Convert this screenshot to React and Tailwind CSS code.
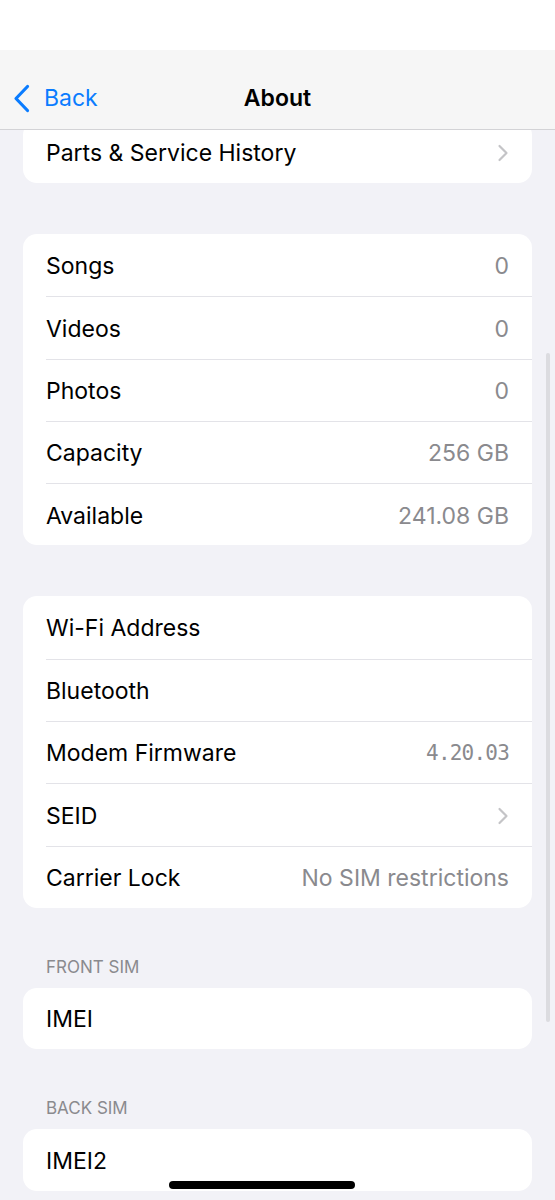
import React from 'react';

const Chevron = () => (
    <svg width="12" height="18" viewBox="0 0 12 18" fill="none" className="shrink-0">
        <path d="M2.5 2 L9.5 9 L2.5 16" stroke="#c4c4c7" strokeWidth="2.2" strokeLinecap="round" strokeLinejoin="round" />
    </svg>
);

const Row = ({ label, value, chevron, mono, first, h = 'h-[62.3px]' }) => (
    <div className={`${h} pl-[23px]`}>
        <div className={`h-full pt-[2px] flex items-center justify-between pr-[23px] ${first ? '' : 'border-t border-[#e3e3e8]'}`}>
            <span className="text-[23px] text-black">{label}</span>
            {value && (
                <span className={mono ? "text-[21px] tracking-[-0.8px] text-[#8a8a8e] font-['DejaVu_Sans_Mono',monospace]" : "text-[23px] text-[#8a8a8e]"}>
                    {value}
                </span>
            )}
            {chevron && <Chevron />}
        </div>
    </div>
);

const Card = ({ rows, className = '', h }) => (
    <div className={`mx-[23px] bg-white rounded-[14px] overflow-hidden ${className}`}>
        {rows.map((r, i) => (
            <Row key={r.label} {...r} h={h} first={i === 0} />
        ))}
    </div>
);

const SectionHeader = ({ children }) => (
    <div className="h-[80px] flex items-end pb-[11px] px-[46px]">
        <span className="text-[17px] leading-[20px] text-[#8a8a8e] uppercase">{children}</span>
    </div>
);

export default function App() {
    return (
        <div className="relative w-[555px] h-[1200px] overflow-hidden bg-[#f2f2f7] font-['Inter',sans-serif]">
            {/* status bar */}
            <div className="h-[50px] bg-white" />
            {/* nav */}
            <div className="relative z-10 h-[80px] pt-[17px] bg-[#f6f6f6] border-b border-[#d3d3d6] flex items-center">
                <div className="flex items-center pl-[13px] gap-[14px]">
                    <svg width="17" height="29" viewBox="0 0 17 29" fill="none">
                        <path d="M14.5 2.5 L3 14.5 L14.5 26.5" stroke="#0a7cff" strokeWidth="3.2" strokeLinecap="round" strokeLinejoin="round" />
                    </svg>
                    <span className="text-[23px] text-[#0a7cff]">Back</span>
                </div>
                <span className="absolute left-1/2 -translate-x-1/2 text-[23px] font-semibold text-black">About</span>
            </div>
            {/* content */}
            <div className="overflow-hidden">
                <div className="-mt-[9px]">
                    <Card h="h-[62px]" rows={[{ label: 'Parts & Service History', chevron: true }]} />
                    <Card
                        className="mt-[51px]"
                        rows={[
                            { label: 'Songs', value: '0' },
                            { label: 'Videos', value: '0' },
                            { label: 'Photos', value: '0' },
                            { label: 'Capacity', value: '256 GB' },
                            { label: 'Available', value: '241.08 GB' },
                        ]}
                    />
                    <Card
                        className="mt-[51px]"
                        rows={[
                            { label: 'Wi-Fi Address' },
                            { label: 'Bluetooth' },
                            { label: 'Modem Firmware', value: '4.20.03', mono: true },
                            { label: 'SEID', chevron: true },
                            { label: 'Carrier Lock', value: 'No SIM restrictions' },
                        ]}
                    />
                    <SectionHeader>Front SIM</SectionHeader>
                    <Card h="h-[61px]" rows={[{ label: 'IMEI' }]} />
                    <SectionHeader>Back SIM</SectionHeader>
                    <Card h="h-[62px]" rows={[{ label: 'IMEI2' }]} />
                </div>
            </div>
            {/* scroll indicator */}
            <div className="absolute left-[546px] top-[353px] w-[4px] h-[669px] rounded-full bg-[#dcdce0]" />
            {/* home indicator */}
            <div className="absolute left-[169px] top-[1181px] w-[186px] h-[8px] rounded-full bg-black" />
        </div>
    );
}
